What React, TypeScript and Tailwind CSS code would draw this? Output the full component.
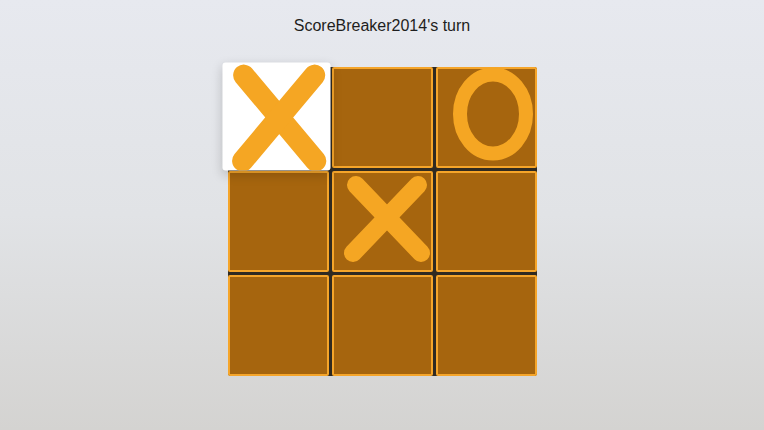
import React from 'react';

type Mark = 'X' | 'O' | null;

const board: Mark[] = ['X', null, 'O', null, 'X', null, null, null, null];

function XMark({ big }: { big?: boolean }) {
  // coordinates in cell space (101 x 101)
  const p = big
    ? { a: [20, 12, 87, 92], b: [86, 12, 19, 92], w: 20 }
    : { a: [24, 14, 89, 82], b: [86, 14, 21, 82], w: 18 };
  return (
    <svg viewBox="0 0 101 101" className="absolute inset-0 h-full w-full">
      <line x1={p.a[0]} y1={p.a[1]} x2={p.a[2]} y2={p.a[3]} stroke="#f5a623" strokeWidth={p.w} strokeLinecap="round" />
      <line x1={p.b[0]} y1={p.b[1]} x2={p.b[2]} y2={p.b[3]} stroke="#f5a623" strokeWidth={p.w} strokeLinecap="round" />
    </svg>
  );
}

function OMark() {
  return (
    <svg viewBox="0 0 101 101" className="absolute inset-0 h-full w-full">
      <ellipse cx="57" cy="47" rx="33" ry="39.5" fill="none" stroke="#f5a623" strokeWidth="14" />
    </svg>
  );
}

function Cell({ mark, focused, index }: { mark: Mark; focused: boolean; index: number }) {
  if (focused) {
    return (
      <div className="relative z-10 h-[101px] w-[101px] -translate-x-[2px] -translate-y-[1px] scale-[1.07] rounded-[3px] bg-white shadow-[0_4px_10px_rgba(0,0,0,0.18)]">
        {mark === 'X' && <XMark big />}
        {mark === 'O' && <OMark />}
      </div>
    );
  }
  return (
    <div className="relative h-[101px] w-[101px] rounded-[2px] border-2 border-[#f5a52a] bg-[#a6650e]">
      <div className="absolute -inset-[2px]">
        {mark === 'X' && <XMark big={index === 0} />}
        {mark === 'O' && <OMark />}
      </div>
    </div>
  );
}

export default function App() {
  return (
    <div
      className="flex h-[430px] w-full flex-col items-center overflow-hidden bg-linear-to-b from-[#e7e9ef] via-[#e1e3e6] to-[#d4d3d1] pt-[16px]"
      style={{ fontFamily: '"Liberation Sans", Arial, sans-serif' }}
    >
      <div className="text-[16px] leading-[20px] text-[#1e1e20]">ScoreBreaker2014's turn</div>
      <div className="mt-[31px] grid grid-cols-[101px_101px_101px] gap-[3px] rounded-[3px] bg-[#2f2a22]">
        {board.map((m, i) => (
          <Cell key={i} mark={m} focused={i === 0} index={i} />
        ))}
      </div>
    </div>
  );
}
